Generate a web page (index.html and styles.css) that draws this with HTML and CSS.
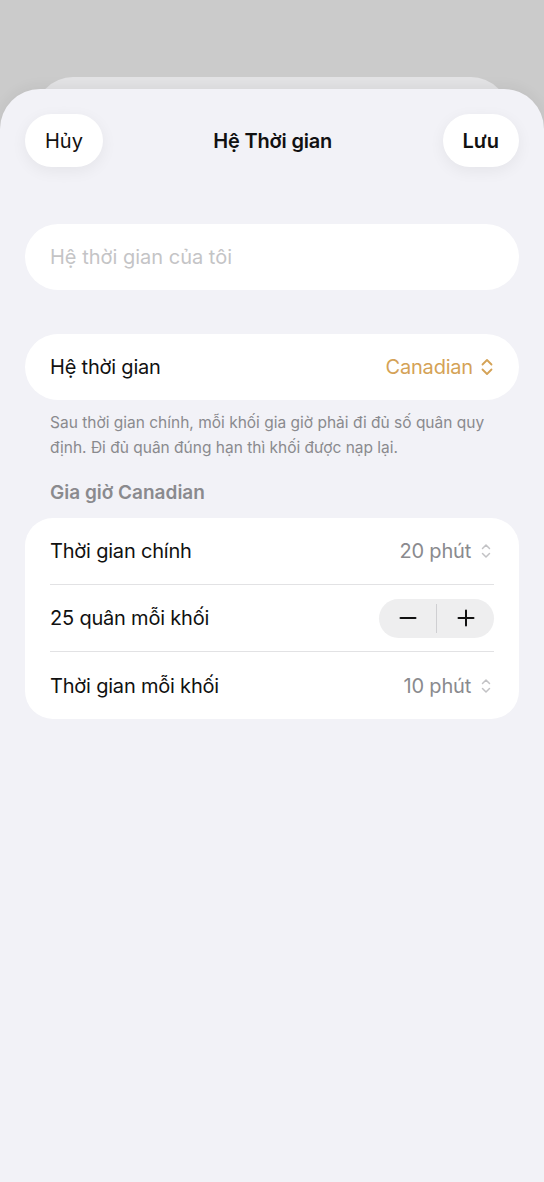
FILE: index.html
```html
<!DOCTYPE html>
<html lang="vi">
<head>
    <meta charset="UTF-8">
    <meta name="viewport" content="width=device-width, initial-scale=1.0">
    <title>Hệ Thời gian</title>
    <link rel="stylesheet" href="styles.css">
</head>
<body>

    <div class="sheet-back"></div>

    <div class="sheet">
        <header class="nav">
            <button class="nav-btn">Hủy</button>
            <h1>Hệ Thời gian</h1>
            <button class="nav-btn save">Lưu</button>
        </header>

        <input class="name-input" type="text" placeholder="Hệ thời gian của tôi">

        <div class="card single">
            <div class="row">
                <span class="label">Hệ thời gian</span>
                <span class="value accent">Canadian
                    <svg class="chev" width="14" height="18" viewBox="0 0 14 18"><path d="M2.5 6.5 7 2l4.5 4.5M2.5 11.5 7 16l4.5-4.5" fill="none" stroke="currentColor" stroke-width="1.8" stroke-linecap="round" stroke-linejoin="round"/></svg>
                </span>
            </div>
        </div>

        <p class="footnote">Sau thời gian chính, mỗi khối gia giờ phải đi đủ số quân quy định. Đi đủ quân đúng hạn thì khối được nạp lại.</p>

        <h2 class="section-title">Gia giờ Canadian</h2>

        <div class="card">
            <div class="row">
                <span class="label">Thời gian chính</span>
                <span class="value">20 phút
                    <svg class="chev small" width="12" height="16" viewBox="0 0 12 16"><path d="M2.5 5.5 6 2l3.5 3.5M2.5 10.5 6 14l3.5-3.5" fill="none" stroke="currentColor" stroke-width="1.5" stroke-linecap="round" stroke-linejoin="round"/></svg>
                </span>
            </div>
            <div class="row">
                <span class="label">25 quân mỗi khối</span>
                <div class="stepper">
                    <button class="step">
                        <svg width="18" height="18" viewBox="0 0 18 18"><path d="M1.5 9h15" stroke="#111" stroke-width="2" stroke-linecap="round"/></svg>
                    </button>
                    <span class="step-sep"></span>
                    <button class="step">
                        <svg width="18" height="18" viewBox="0 0 18 18"><path d="M1.5 9h15M9 1.5v15" stroke="#111" stroke-width="2" stroke-linecap="round"/></svg>
                    </button>
                </div>
            </div>
            <div class="row">
                <span class="label">Thời gian mỗi khối</span>
                <span class="value">10 phút
                    <svg class="chev small" width="12" height="16" viewBox="0 0 12 16"><path d="M2.5 5.5 6 2l3.5 3.5M2.5 10.5 6 14l3.5-3.5" fill="none" stroke="currentColor" stroke-width="1.5" stroke-linecap="round" stroke-linejoin="round"/></svg>
                </span>
            </div>
        </div>
    </div>

</body>
</html>
```

FILE: styles.css
```css
* {
    box-sizing: border-box;
    margin: 0;
    padding: 0;
    font-family: Inter, "Noto Sans", Arial, sans-serif;
}

html, body {
    height: 100%;
}

body {
    display: flex;
    flex-direction: column;
    background: #cbcbcb;
    color: #111;
    padding-top: 77px;
    overflow: hidden;
}

.sheet-back {
    height: 40px;
    margin: 0 35px;
    background: #e3e3e5;
    border-radius: 38px 38px 0 0;
    flex-shrink: 0;
}

.sheet {
    position: relative;
    flex: 1;
    margin-top: -28px;
    background: #f2f2f7;
    border-radius: 40px 40px 0 0;
    padding: 25px 25px 0;
    box-shadow: 0 -2px 14px rgba(0, 0, 0, 0.06);
}

.nav {
    display: flex;
    align-items: center;
    justify-content: space-between;
    height: 53px;
}

.nav h1 {
    font-size: 20px;
    font-weight: 600;
    letter-spacing: -0.2px;
}

.nav-btn {
    height: 53px;
    padding: 0 20px;
    border: none;
    border-radius: 27px;
    background: #fff;
    font-size: 20px;
    color: #111;
    box-shadow: 0 4px 16px rgba(0, 0, 0, 0.06);
}

.nav-btn.save {
    font-weight: 600;
}

.name-input {
    display: block;
    width: 100%;
    height: 66px;
    margin-top: 57px;
    padding: 0 25px;
    border: none;
    border-radius: 33px;
    background: #fff;
    font-size: 20px;
    outline: none;
}

.name-input::placeholder {
    color: #c4c4c6;
}

.card {
    background: #fff;
    border-radius: 28px;
}

.card.single {
    margin-top: 44px;
    border-radius: 33px;
}

.row {
    display: flex;
    align-items: center;
    justify-content: space-between;
    height: 67px;
    margin: 0 25px;
    border-bottom: 1px solid #e2e2e4;
}

.card.single .row {
    height: 66px;
}

.row:last-child {
    border-bottom: none;
}

.label {
    font-size: 20px;
    letter-spacing: -0.2px;
}

.value {
    display: flex;
    align-items: center;
    gap: 9px;
    font-size: 20px;
    color: #8a8a8e;
    letter-spacing: -0.2px;
}

.value.accent {
    color: #d4a256;
    gap: 7px;
}

.chev.small {
    color: #c2c2c5;
    margin-right: 2px;
}

.footnote {
    margin: 10px 25px 0;
    font-size: 15.5px;
    line-height: 25px;
    color: #8a8a8e;
}

.section-title {
    margin: 21px 25px 14px;
    font-size: 19px;
    font-weight: 600;
    color: #8a8a8e;
}

.stepper {
    display: flex;
    align-items: center;
    height: 39px;
    width: 115px;
    border-radius: 20px;
    background: #eeeeef;
}

.step {
    flex: 1;
    height: 100%;
    display: flex;
    align-items: center;
    justify-content: center;
    border: none;
    background: none;
}

.step-sep {
    width: 1px;
    height: 29px;
    background: #cfcfd2;
}
```
